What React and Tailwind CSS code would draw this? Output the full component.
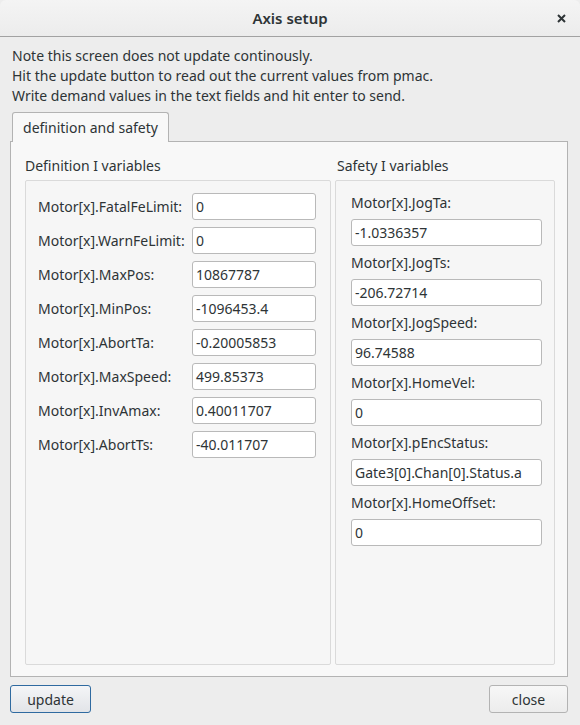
const definition = [
  ['Motor[x].FatalFeLimit:', '0'],
  ['Motor[x].WarnFeLimit:', '0'],
  ['Motor[x].MaxPos:', '10867787'],
  ['Motor[x].MinPos:', '-1096453.4'],
  ['Motor[x].AbortTa:', '-0.20005853'],
  ['Motor[x].MaxSpeed:', '499.85373'],
  ['Motor[x].InvAmax:', '0.40011707'],
  ['Motor[x].AbortTs:', '-40.011707'],
];

const safety = [
  ['Motor[x].JogTa:', '-1.0336357'],
  ['Motor[x].JogTs:', '-206.72714'],
  ['Motor[x].JogSpeed:', '96.74588'],
  ['Motor[x].HomeVel:', '0'],
  ['Motor[x].pEncStatus:', 'Gate3[0].Chan[0].Status.a'],
  ['Motor[x].HomeOffset:', '0'],
];

function Field({ value, className }) {
  return (
    <div
      className={`h-[27px] bg-white border border-[#b9b9b9] rounded-[3px] px-[3px] flex items-center text-[14px] text-[#2e3436] ${className}`}
    >
      {value}
    </div>
  );
}

export default function App() {
  return (
    <div
      className="w-[580px] h-[725px] bg-[#ededed] flex flex-col text-[#2e3436] overflow-hidden"
      style={{ fontFamily: '"Noto Sans", "Open Sans", sans-serif' }}
    >
      {/* Title bar */}
      <div className="h-[37px] shrink-0 bg-gradient-to-b from-[#f4f4f4] to-[#ececec] border-b border-[#a2a2a2] rounded-t-[6px] flex items-center justify-center relative">
        <span className="text-[15px] font-semibold text-[#2e3436]">Axis setup</span>
        <svg
          className="absolute left-[557px] top-[14px]"
          width="9"
          height="9"
          viewBox="0 0 9 9"
        >
          <path d="M1 1L8 8M8 1L1 8" stroke="#2e3436" strokeWidth="2" />
        </svg>
      </div>

      {/* Notes */}
      <div className="pt-[9px] px-[12px] text-[14px] leading-[20px]">
        <div>Note this screen does not update continously.</div>
        <div>Hit the update button to read out the current values from pmac.</div>
        <div>Write demand values in the text fields and hit enter to send.</div>
      </div>

      {/* Tab */}
      <div className="mt-[5px] ml-[12px] flex">
        <div className="w-[157px] h-[30px] bg-[#f8f8f8] border border-b-0 border-[#b3b3b3] rounded-t-[3px] flex items-center justify-center text-[14px] relative top-[1px]">
          definition and safety
        </div>
      </div>

      {/* Panel */}
      <div className="ml-[10px] mr-[12px] h-[536px] border border-[#b3b3b3] bg-[#f8f8f8] flex gap-[4px] pl-[14px] pr-[12px] pt-[14px] pb-[11px]">
        {/* Left */}
        <div className="w-[306px] flex flex-col">
          <div className="text-[14px] leading-[20px] h-[24px]">Definition I variables</div>
          <div className="flex-1 border border-[#dadada] rounded-[2px] bg-[#f6f6f6] pt-[12px] pl-[12px] pr-[14px] flex flex-col gap-[7px]">
            {definition.map(([label, value]) => (
              <div key={label} className="flex items-center">
                <div className="w-[154px] text-[14px]">{label}</div>
                <Field value={value} className="flex-1" />
              </div>
            ))}
          </div>
        </div>

        {/* Right */}
        <div className="flex-1 flex flex-col">
          <div className="text-[14px] leading-[20px] h-[24px] pl-[2px]">Safety I variables</div>
          <div className="flex-1 border border-[#dadada] rounded-[2px] bg-[#f6f6f6] pt-[12px] pl-[15px] pr-[12px] flex flex-col">
            {safety.map(([label, value]) => (
              <div key={label} className="flex flex-col h-[60px]">
                <div className="text-[14px] leading-[20px] h-[26px]">{label}</div>
                <Field value={value} />
              </div>
            ))}
          </div>
        </div>
      </div>

      {/* Buttons */}
      <div className="flex justify-between pl-[10px] pr-[12px] mt-[8px]">
        <button className="w-[81px] h-[28px] rounded-[3px] border border-[#2f6aa0] bg-gradient-to-b from-[#f4f5f7] to-[#e2e4e8] text-[14px] text-[#2e3436]">
          update
        </button>
        <button className="w-[79px] h-[28px] rounded-[3px] border border-[#b3b3b3] bg-gradient-to-b from-[#f7f7f7] to-[#ececec] text-[14px] text-[#2e3436]">
          close
        </button>
      </div>
    </div>
  );
}
